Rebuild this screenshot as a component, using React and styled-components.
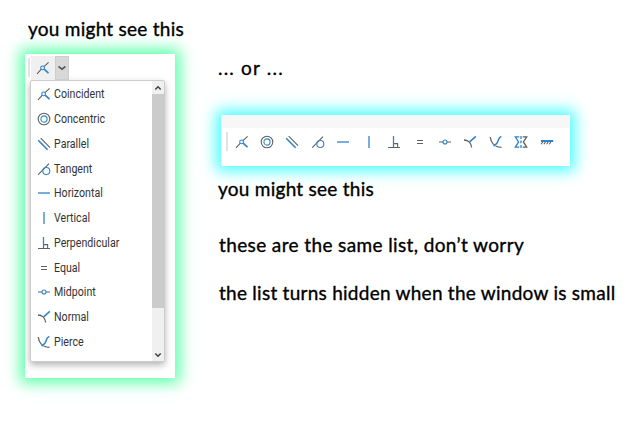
import React from "react";
import styled, { createGlobalStyle } from "styled-components";

const GlobalStyle = createGlobalStyle`
  * { box-sizing: border-box; }
  body { margin: 0; background: #fff; }
`;

const Page = styled.main`
  display: flex;
  width: 629px;
  height: 432px;
  overflow: hidden;
  background: #fff;
`;

const MenuColumn = styled.section`
  flex: none;
  width: 218px;
  padding: 15px 0 0 25px;
`;

const ToolbarColumn = styled.section`
  flex: none;
  width: 411px;
  padding-top: 54px;
`;

const Caption = styled.p`
  margin: ${(p) => p.$margin || "0"};
  height: 28px;
  line-height: 28px;
  font-family: Lato, Carlito, sans-serif;
  font-size: 19px;
  font-weight: 400;
  letter-spacing: ${(p) => p.$spacing || "0.26px"};
  -webkit-text-stroke: 0.35px #000;
  color: #000;
  white-space: nowrap;
`;

const GreenPanel = styled.div`
  width: 150px;
  height: 324px;
  margin-top: 11px;
  padding: 1px 0 0 3px;
  background: #fff;
  box-shadow: 0 0 14px 5px #5cffab;
`;

const SplitButton = styled.div`
  display: flex;
  align-items: center;
  height: 25px;
`;

const Divider = styled.span`
  flex: none;
  width: 2px;
  height: 19px;
  background: #e2e2e2;
`;

const CurrentTool = styled.button`
  display: flex;
  align-items: center;
  justify-content: center;
  width: 24px;
  height: 24px;
  margin-left: 1px;
  padding: 0;
  border: 0;
  background: #f0f0f0;
`;

const MenuToggle = styled(CurrentTool)`
  width: 14px;
  margin: 0;
  border: 1px solid #cdcdcd;
  background: #d8d8d8;
`;

const Menu = styled.div`
  display: flex;
  width: 135px;
  height: 282px;
  margin: 0 0 0 2px;
  border: 1px solid #cbcbcb;
  border-radius: 2px;
  background: #fff;
  box-shadow: 0 3px 7px rgba(0, 0, 0, 0.3);
`;

const MenuList = styled.ul`
  flex: 1;
  margin: 0;
  padding: 1px 0 0 5px;
  list-style: none;
`;

const MenuItem = styled.li`
  display: flex;
  align-items: center;
  height: 24.75px;
`;

const MenuLabel = styled.span`
  margin-left: 2px;
  font-family: Roboto, sans-serif;
  font-size: 12px;
  color: #333;
  white-space: nowrap;
  transform: scaleX(0.885);
  transform-origin: left center;
`;

const Scrollbar = styled.div`
  display: flex;
  flex-direction: column;
  justify-content: space-between;
  width: 12px;
  background: #f0f0f0;
`;

const ScrollButton = styled.span`
  display: flex;
  align-items: center;
  justify-content: center;
  height: 13px;
`;

const ScrollThumb = styled.span`
  height: 214px;
  margin-bottom: auto;
  background: #cbcbcb;
`;

const BluePanel = styled.div`
  width: 349px;
  height: 51px;
  margin: 33px 0 0 3px;
  background: #fff;
  box-shadow: 0 0 14px 5px #4dfcff;
`;

const RibbonStrip = styled.div`
  height: 13px;
  background: #f7f7f7;
`;

const Toolbar = styled.div`
  display: flex;
  align-items: center;
  height: 27px;
  padding: 0 0 0 5px;
`;

const ToolRow = styled.div`
  display: flex;
  gap: 9.45px;
  margin-left: 5.5px;
`;

const IconSvg = styled.svg`
  display: block;
  flex: none;
  width: 16px;
  height: 16px;
  fill: none;
  stroke: #606060;
  stroke-width: 1.1;

  .blue { stroke: #2e83ca; }
  .bold { stroke-width: 1.6; }
`;

const ArrowSvg = styled.svg`
  display: block;
  width: ${(p) => p.$width || 8}px;
  height: 6px;
  fill: none;
  stroke: ${(p) => p.$color || "#444"};
  stroke-width: 1.6;
`;

const shapes = {
  Coincident: (
    <>
      <path d="M2 13.8 6.4 9.2M9 6.6 13.6 2.4" />
      <circle className="blue" cx="7.6" cy="7.9" r="1.9" />
      <path className="blue bold" d="m9.1 9.2 4.4 4" />
    </>
  ),
  Concentric: (
    <>
      <circle cx="8" cy="8" r="5.8" />
      <circle className="blue" cx="8" cy="8" r="3.1" />
    </>
  ),
  Parallel: (
    <>
      <path className="blue bold" d="m2.2 4.2 9.4 9.6" />
      <path d="m4.7 2.2 9.3 9.4" />
    </>
  ),
  Tangent: (
    <>
      <path d="M2.2 13.6 13 2.7" />
      <circle className="blue" cx="10.3" cy="10" r="3.5" />
    </>
  ),
  Horizontal: <path className="blue" strokeWidth="1.3" d="M2 8h12" />,
  Vertical: <path className="blue" strokeWidth="1.3" d="M8 2v12" />,
  Perpendicular: (
    <>
      <path className="blue" strokeWidth="1.3" d="M7.5 2v11" />
      <path d="M2 13.5h12M8 9.6h3.6v3.8" />
    </>
  ),
  Equal: <path strokeWidth="1.2" d="M5 6.5h6M5 9.5h6" />,
  Midpoint: (
    <>
      <path d="M2 8h4M10 8h4" />
      <circle className="blue" cx="8" cy="8" r="2" />
    </>
  ),
  Normal: (
    <>
      <path strokeWidth="1.3" d="M2 6c3.8.1 7.200 2.600 7.600 7.500" />
      <path className="blue bold" d="M7.600 7.900 13.800 2.400" />
    </>
  ),
  Pierce: (
    <>
      <path strokeWidth="1.3" d="M2.300 3c.2 3.400 1.500 5.700 3.300 7.600M7.600 12c1.700.9 3.500 1.400 5.900 1.400" />
      <path className="blue" strokeWidth="1.5" d="M6.500 11.300C9.500 10 9.600 8.200 10.200 6.200c.6-2.200 1.400-3.200 3.200-3.800" />
      <circle className="blue" cx="6.300" cy="11.300" r=".6" />
    </>
  ),
  Symmetric: (
    <>
      <path className="blue" strokeWidth="1.3" d="M6.300 2.800H2.300l3.300 5.100-3.300 5.200h4M8 2v3M8 6.600v2.700M8 11v3" />
      <path strokeWidth="1.3" d="M9.700 2.800h4l-3.300 5.100 3.300 5.200h-4" />
    </>
  ),
  Fix: (
    <>
      <path d="m4 7.500-1.800 2.700M6.700 7.500 4.900 10.200M9.400 7.500 7.600 10.200M12.100 7.500 10.300 10.200" />
      <path className="blue" strokeWidth="2" d="M2 7h12.200" />
    </>
  ),
};

const toolNames = Object.keys(shapes);
const menuNames = toolNames.slice(0, 11);

function ToolIcon({ name }) {
  return (
    <IconSvg viewBox="0 0 16 16" aria-hidden="true">
      {shapes[name]}
    </IconSvg>
  );
}

function Arrow({ up, color, width }) {
  return (
    <ArrowSvg viewBox="0 0 8 6" preserveAspectRatio="none" $color={color} $width={width} aria-hidden="true">
      <path d={up ? "M1.300 4.500 4 1.800l2.700 2.700" : "M1.300 1.500 4 4.200l2.700-2.700"} />
    </ArrowSvg>
  );
}

export default function App() {
  return (
    <>
      <GlobalStyle />
      <Page>
        <MenuColumn>
          <Caption $margin="0 0 0 3px">you might see this</Caption>
          <GreenPanel>
            <SplitButton>
              <Divider />
              <CurrentTool aria-label="Coincident">
                <ToolIcon name="Coincident" />
              </CurrentTool>
              <MenuToggle aria-label="Show constraints">
                <Arrow color="#555" width={10} />
              </MenuToggle>
            </SplitButton>
            <Menu>
              <MenuList>
                {menuNames.map((name) => (
                  <MenuItem key={name}>
                    <ToolIcon name={name} />
                    <MenuLabel>{name}</MenuLabel>
                  </MenuItem>
                ))}
              </MenuList>
              <Scrollbar>
                <ScrollButton><Arrow up /></ScrollButton>
                <ScrollThumb />
                <ScrollButton><Arrow /></ScrollButton>
              </Scrollbar>
            </Menu>
          </GreenPanel>
        </MenuColumn>
        <ToolbarColumn>
          <Caption $spacing="1.2px">... or ...</Caption>
          <BluePanel>
            <RibbonStrip />
            <Toolbar>
              <Divider />
              <ToolRow>
                {toolNames.map((name) => (
                  <ToolIcon key={name} name={name} />
                ))}
              </ToolRow>
            </Toolbar>
          </BluePanel>
          <Caption $margin="9px 0 0">you might see this</Caption>
          <Caption $margin="28px 0 0 1px" $spacing="0.38px">these are the same list, don’t worry</Caption>
          <Caption $margin="20px 0 0 1px">the list turns hidden when the window is small</Caption>
        </ToolbarColumn>
      </Page>
    </>
  );
}
